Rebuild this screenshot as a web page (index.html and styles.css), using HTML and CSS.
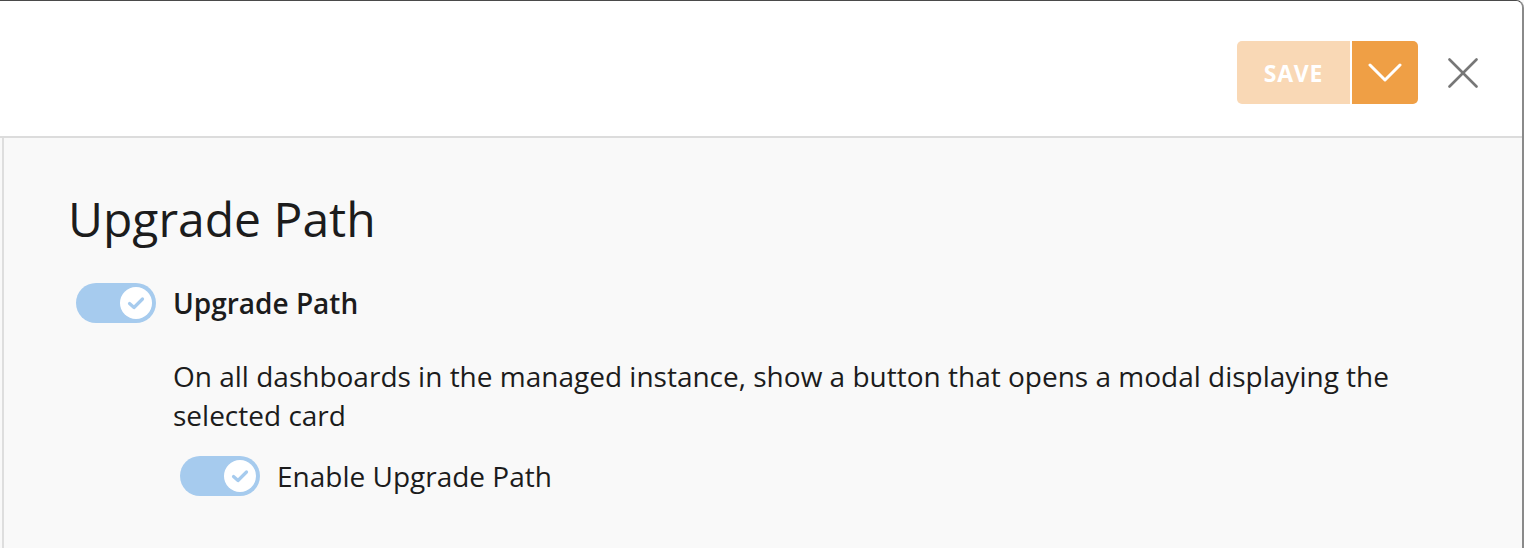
FILE: index.html
```html
<!DOCTYPE html>
<html>
<head>
    <meta charset="utf-8">
    <link rel="stylesheet" href="styles.css">
</head>
<body>
    <div class="modal">
        <div class="modal-header">
            <div class="save-group">
                <button class="btn-save">SAVE</button>
                <button class="btn-menu" aria-label="More">
                    <svg width="34" height="20" viewBox="0 0 34 20">
                        <polyline points="2,2 17,17 32,2" fill="none" stroke="#fff" stroke-width="3" stroke-linecap="round" stroke-linejoin="round"/>
                    </svg>
                </button>
            </div>
            <button class="btn-close" aria-label="Close">
                <svg width="30" height="30" viewBox="0 0 30 30">
                    <line x1="1.5" y1="1.5" x2="28.5" y2="28.5" stroke="#777" stroke-width="2.6" stroke-linecap="round"/>
                    <line x1="28.5" y1="1.5" x2="1.5" y2="28.5" stroke="#777" stroke-width="2.6" stroke-linecap="round"/>
                </svg>
            </button>
        </div>

        <div class="modal-body">
            <h1 class="title">Upgrade Path</h1>

            <div class="setting">
                <span class="toggle">
                    <span class="knob">
                        <svg width="18" height="14" viewBox="0 0 18 14">
                            <polyline points="2.5,7.5 7,11.5 15.5,3" fill="none" stroke="#a6cbee" stroke-width="3.2" stroke-linecap="round" stroke-linejoin="round"/>
                        </svg>
                    </span>
                </span>
                <span class="setting-label">Upgrade Path</span>
            </div>

            <p class="setting-desc">On all dashboards in the managed instance, show a button that opens a modal displaying the selected card</p>

            <div class="setting setting-sub">
                <span class="toggle">
                    <span class="knob">
                        <svg width="18" height="14" viewBox="0 0 18 14">
                            <polyline points="2.5,7.5 7,11.5 15.5,3" fill="none" stroke="#a6cbee" stroke-width="3.2" stroke-linecap="round" stroke-linejoin="round"/>
                        </svg>
                    </span>
                </span>
                <span class="option-label">Enable Upgrade Path</span>
            </div>
        </div>
    </div>
</body>
</html>
```

FILE: styles.css
```css
body {
    margin: 0;
    font-family: 'Open Sans', 'Noto Sans', sans-serif;
    background: #f9f9f9;
    color: #1c1c1c;
}

.modal {
    height: 548px;
    box-sizing: border-box;
    border-top: 1px solid #4a4a4a;
    border-right: 2px solid #8a8a8a;
    border-top-right-radius: 8px;
    overflow: hidden;
    display: flex;
    flex-direction: column;
}

.modal-header {
    height: 137px;
    background: white;
    border-bottom: 2px solid #dcdcdc;
    display: flex;
    justify-content: flex-end;
    align-items: flex-start;
    gap: 30px;
    padding: 40px 44px 0 0;
    box-sizing: border-box;
    flex-shrink: 0;
}

.save-group {
    display: flex;
    gap: 2px;
}

.btn-save,
.btn-menu {
    height: 63px;
    border: none;
    color: white;
    cursor: pointer;
    padding: 0;
    font-family: inherit;
}

.btn-save {
    width: 113px;
    background: #f9d8b5;
    border-radius: 5px 0 0 5px;
    font-size: 23px;
    font-weight: 700;
    letter-spacing: 0.8px;
}

.btn-menu {
    width: 66px;
    background: #ef9f45;
    border-radius: 0 5px 5px 0;
    display: flex;
    align-items: center;
    justify-content: center;
}

.btn-close {
    background: none;
    border: none;
    padding: 0;
    margin-top: 17px;
    width: 30px;
    height: 30px;
    cursor: pointer;
}

.modal-body {
    flex: 1;
    margin-left: 2px;
    border-left: 2px solid #dedede;
    background: #f9f9f9;
    padding: 52px 0 0 64px;
}

.title {
    margin: 0 0 35px 0;
    font-size: 48px;
    font-weight: 400;
    line-height: 1.2;
}

.setting {
    display: flex;
    align-items: center;
    gap: 17px;
    margin-left: 8px;
}

.toggle {
    width: 80px;
    height: 40px;
    border-radius: 20px;
    background: #a6cbee;
    display: flex;
    align-items: center;
    justify-content: flex-end;
    padding: 0 4px;
    box-sizing: border-box;
    flex-shrink: 0;
}

.knob {
    width: 32px;
    height: 32px;
    border-radius: 50%;
    background: white;
    display: flex;
    align-items: center;
    justify-content: center;
}

.setting-label {
    font-size: 28px;
    font-weight: 600;
}

.setting-desc {
    margin: 34px 0 21px 105px;
    max-width: 1260px;
    font-size: 28px;
    line-height: 39px;
}

.setting-sub {
    margin-left: 112px;
}

.option-label {
    font-size: 28px;
}
```
